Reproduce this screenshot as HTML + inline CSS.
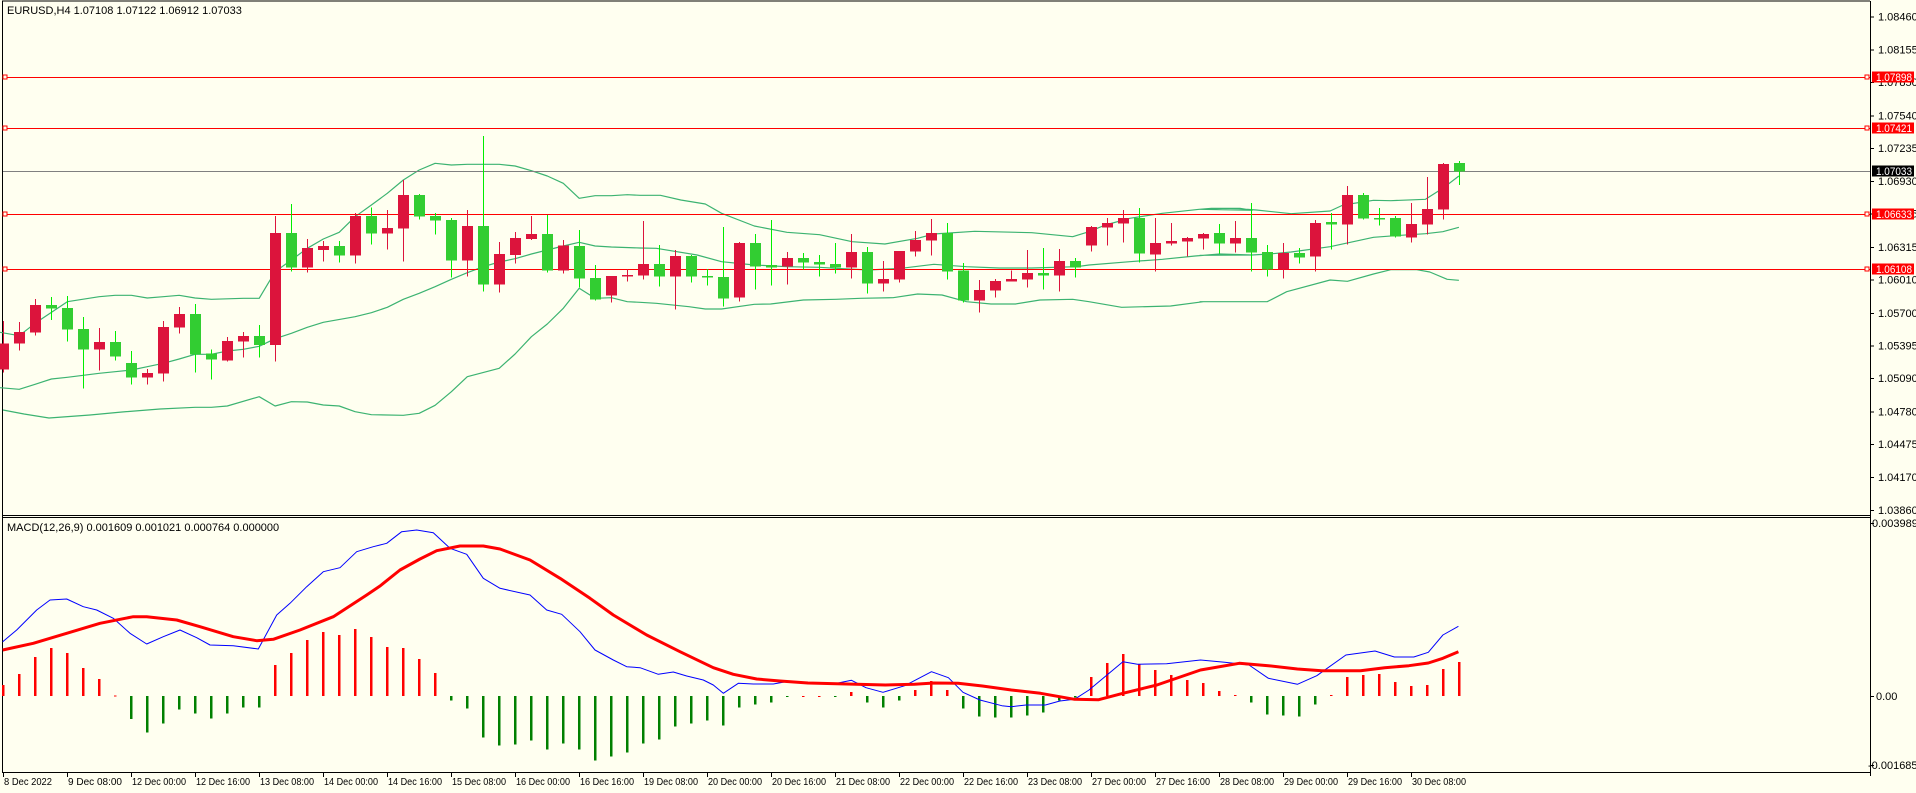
<!DOCTYPE html>
<html><head><meta charset="utf-8">
<style>
html,body{margin:0;padding:0;background:#fffff0;}
body{width:1916px;height:793px;overflow:hidden;}
svg{display:block;font-family:"Liberation Sans","DejaVu Sans",sans-serif;}
</style></head>
<body>
<svg id="c" width="1916" height="793" xmlns="http://www.w3.org/2000/svg">
<rect x="0" y="0" width="1916" height="793" fill="#fffff0"/>
<text x="7" y="14" font-size="11" fill="#000">EURUSD,H4  1.07108 1.07122 1.06912 1.07033</text>
<text x="7" y="531" font-size="11" fill="#000">MACD(12,26,9) 0.001609 0.001021 0.000764 0.000000</text>
</svg>
<script>
(function(){
var s=document.getElementById('c');var NS='http://www.w3.org/2000/svg';
function el(t,a,txt){var e=document.createElementNS(NS,t);for(var k in a)e.setAttribute(k,a[k]);if(txt!=null)e.textContent=txt;s.appendChild(e);return e;}
function line(x1,y1,x2,y2,c,w){el('line',{x1:x1,y1:y1,x2:x2,y2:y2,stroke:c,'stroke-width':w||1,'shape-rendering':'crispEdges'});}
function poly(pts,c,w){el('polyline',{points:pts.map(function(p){return p[0].toFixed(1)+','+p[1].toFixed(1)}).join(' '),fill:'none',stroke:c,'stroke-width':w,'stroke-linejoin':'round'});}
function py(p){return 77+(1.07898-p)*10726;}
line(2,1,1870,1,'#000');line(2.5,1,2.5,772,'#000');line(1870.5,1,1870.5,776,'#000');
line(2,515.5,1870,515.5,'#000');line(2,517.5,1870,517.5,'#000');line(2,772.5,1870,772.5,'#000');
function conv(arr,ox,sx,oy){return arr.map(function(p){return [ox+p[0]/sx,oy+p[1]/3];});}
var up=[].concat(
 [[0,120+637/3]],
 conv([[47,647],[86,610],[165,545],[243,530],[282,526],[322,526],[361,534],[400,530],[439,526],[478,534],[518,538],[596,535],[635,535],[674,455],[714,420],[753,385],[792,357],[831,337],[870,290],[910,255],[949,220],[988,180],[1027,150],[1066,130],[1106,135],[1145,133],[1184,133],[1223,133],[1262,138],[1302,152],[1341,168],[1380,190],[1419,235],[1458,227],[1498,227],[1537,224]],0,2.45,120),
 conv([[0,226],[50,226],[100,240],[160,252],[200,280],[280,318],[360,337],[440,344],[520,365],[600,372],[680,355],[720,342],[820,334],[960,338],[1060,350],[1100,335],[1140,315],[1200,295],[1280,280],[1370,268],[1400,265],[1470,265],[1500,271]],640,2.45,120),
 conv([[0,268],[60,265],[90,266],[130,270],[210,281],[300,273],[330,255],[400,241],[440,242],[520,238],[560,205],[597,168]],1200,2.306,120));
var mid=[].concat(
 conv([[0,803],[47,808],[86,793],[126,777],[165,772],[243,760],[282,755],[322,750],[361,740],[400,730],[439,717],[478,703],[518,703],[557,693],[596,688],[635,679],[674,656],[714,640],[753,622],[792,607],[870,590],[910,578],[949,562],[988,538],[1027,520],[1066,500],[1106,478],[1145,458],[1184,440],[1223,426],[1262,416],[1302,402],[1341,390],[1380,378],[1419,367],[1458,378],[1498,381]],0,2.45,120),
 conv([[0,384],[40,385],[140,405],[200,425],[280,435],[360,440],[440,442],[480,445],[560,450],[640,445],[720,433],[800,440],[880,444],[960,444],[1070,440],[1100,435],[1200,425],[1280,418],[1360,408],[1420,402],[1500,405]],640,2.45,120),
 conv([[0,406],[120,405],[160,402],[210,396],[300,380],[400,352],[450,347],[520,341],[560,335],[597,322]],1200,2.306,120));
var lo=[].concat(
 [[3,410],[24,414],[49,418],[90,415],[122,412],[160,409]],
 conv([[478,862],[518,862],[557,858],[635,830],[674,858],[714,845],[753,846],[792,855],[831,858],[870,875],[910,884],[988,886],[1027,880],[1066,856],[1106,815],[1145,770],[1223,745],[1262,702],[1302,650],[1341,612],[1380,565],[1419,505],[1458,535],[1498,533],[1537,545]],0,2.45,120),
 conv([[0,547],[40,550],[120,560],[160,567],[200,567],[280,553],[320,552],[400,540],[480,538],[540,535],[620,533],[680,522],[740,525],[800,545],[860,552],[920,552],[980,540],[1060,538],[1100,545],[1180,562],[1300,558],[1380,545],[1530,545]],640,2.45,120),
 conv([[0,545],[155,545],[200,515],[300,480],[340,484],[400,462],[440,449],[500,449],[530,456],[570,478],[597,481]],1200,2.306,120));
[up,mid,lo].forEach(function(a){poly(a,'#3cb371',1.2);});
[[1.07898,77],[1.07421,128],[1.06633,214],[1.06108,269]].forEach(function(h){
 line(3,h[1]+0.5,1870,h[1]+0.5,'#ff0000',1.3);
 el('rect',{x:3,y:h[1]-2,width:4,height:4,fill:'#fffff0',stroke:'#ff0000','stroke-width':1});
 el('rect',{x:1865,y:h[1]-2,width:4,height:4,fill:'#fffff0',stroke:'#ff0000','stroke-width':1});
});
line(3,171.5,1870,171.5,'#808080',1.2);
var C=[
[670,748,603,758,0],[636,671,606,692,0],[555,638,537,647,0],[555,566,531,600,1],[564,629,528,665,1],[627,689,591,806,1],[666,689,624,752,0],[666,710,633,722,1],[729,773,693,794,1],[759,773,747,794,0],
[621,761,603,785,0],[582,623,561,641,0],[582,703,552,758,1],[700,719,688,779,1],[663,722,651,725,0],[648,665,636,713,0],[648,675,615,713,1],[339,675,288,725,0],[339,443,252,455,1],[384,443,357,458,0],
[378,390,363,425,0],[378,407,363,428,1],[288,407,279,431,0],[288,341,262,374,1],[324,341,270,389,0],[225,326,180,425,0],[225,290,222,299,1],[288,302,279,344,1],[300,422,294,473,1],[318,422,270,470,0],
[318,494,48,515,1],[402,494,366,518,0],[354,405,336,431,0],[342,357,288,360,0],[342,452,285,458,1],[377,452,360,461,0],[378,476,330,503,1],[474,539,435,542,1],[468,527,468,548,0],[465,470,447,485,0],
[432,467,303,479,0],[432,470,375,500,1],[408,470,390,569,0],[408,470,405,488,1],[468,473,447,497,1],[471,536,321,560,1],[369,533,366,545,0],[369,440,342,509,1],[435,443,300,497,1],[414,440,396,494,0],
[414,428,399,449,1],[426,434,405,470,1],[432,443,369,461,1],[396,443,342,476,0],[396,491,381,521,1],[477,491,423,515,0],[393,479,393,488,0],[360,395,333,410,0],[339,362,297,407,0],[339,455,309,479,1],
[452,542,429,548,1],[510,542,480,578,0],[483,512,477,533,0],[477,485,452,485,0],[459,479,390,503,0],[459,467,384,509,1],[423,467,387,515,0],[423,443,414,473,1],[321,377,318,395,0],[309,323,294,377,0],
[294,311,270,368,0],[294,401,264,428,1],[369,404,294,455,0],[363,371,309,377,0],[354,365,351,410,0],[342,356,339,389,0],[339,371,312,401,1],[354,371,303,398,0],[354,398,249,455,1],[396,449,375,470,1],
[399,449,369,476,0],[399,413,384,431,1],[309,410,300,455,0],[306,314,279,389,1],[225,314,198,374,0],[225,296,219,299,1],[294,296,264,317,1],[294,350,288,353,1],[312,353,249,368,0],[267,314,171,344,0],
[132,269,129,299,0],[129,154,123,195,1]];
C.forEach(function(c,i){
 var x=3+16*i,bt=120+c[0]/3,bb=120+c[1]/3,wt=120+c[2]/3,wb=120+c[3]/3;
 var body=c[4]?'#32cd32':'#dc143c',wick=c[4]?'#00ee00':'#dc143c';
 line(x+0.5,wt,x+0.5,wb,wick,1);
 var h=Math.max(bb-bt,1.5);
 el('rect',{x:x-5,y:bt,width:11,height:h,fill:body,'shape-rendering':'crispEdges'});
});
var H=[[210,1],[177,1],[126,1],[99,1],[114,1],[159,1],[192,1],[241,1],[312,0],[353,0],[326,0],[284,0],[296,0],[311,0],[296,0],[278,0],[278,0],[150,1],[114,1],[75,1],[51,1],[60,1],[42,1],[66,1],[96,1],[99,1],[132,1],[174,1],[257,0],[281,0],[368,0],[392,0],[389,0],[377,0],[404,0],[386,0],[404,0],[437,0],[425,0],[413,0],[386,0],[374,0],[335,0],[326,0],[317,0],[332,0],[278,0],[268,0],[263,0],[246,0],[244,1],[244,1],[244,0],[231,1],[263,0],[278,0],[257,0],[225,1],[198,1],[225,1],[281,0],[305,0],[308,0],[308,0],[302,0],[293,0],[257,0],[248,0],[186,1],[144,1],[117,1],[147,1],[165,1],[180,1],[195,1],[204,1],[228,1],[240,1],[263,0],[299,0],[302,0],[305,0],[269,0],[240,1],[186,1],[180,1],[177,1],[201,1],[213,1],[210,1],[162,1],[141,1]];
H.forEach(function(h,i){var x=3+16*i,y=615+h[0]/3;
 el('rect',{x:x-1,y:Math.min(y,696),width:2.5,height:Math.max(Math.abs(y-696),1),fill:h[1]?'#ff0000':'#008000','shape-rendering':'crispEdges'});});
function cv(a,ox,sx,oy){return a.map(function(p){return [ox+p[0]/sx,oy+p[1]/3];});}
var blue=[].concat(
 cv([[8,485],[50,450],[110,390],[150,360],[200,357],[250,380],[290,390],[340,415],[390,460],[440,492],[490,470],[540,450],[590,473],[630,495],[700,497],[775,507],[830,405],[870,370],[920,320],[970,275],[1020,263],[1070,215],[1120,200]],0,3,480),
 cv([[0,90],[20,85],[65,50],[110,45],[160,53],[210,100],[260,118],[310,190],[360,220],[450,240],[500,285],[545,298],[600,350],[645,405],[700,435],[740,455],[780,458],[835,478],[880,471],[920,483],[970,495],[1000,510],[1030,535],[1075,505],[1120,507],[1180,507],[1230,498]],380,3,515),
 cv([[110,200],[170,205],[200,205],[230,196],[260,218],[295,232],[340,212],[395,170],[430,188],[460,232],[495,255],[540,272],[560,275],[590,270],[630,270],[660,258],[690,253],[720,225],[790,140],[820,148],[880,146],[950,135],[1000,142],[1050,150],[1090,190],[1150,208],[1190,182],[1250,120],[1310,108],[1350,126],[1390,126],[1420,112],[1450,60],[1482,34]],740,2.063,615));
var red=[].concat(
 cv([[8,510],[100,490],[200,460],[300,430],[400,410],[440,410],[530,420],[600,440],[700,470],[770,482],[820,478],[900,450],[1000,410],[1100,345]],0,3,480),
 cv([[0,213],[60,165],[120,132],[170,107],[240,93],[310,93],[360,102],[450,135],[540,190],[630,250],[700,300],[800,360],[900,410],[1000,458],[1060,478],[1130,492],[1200,498]],380,3,515),
 cv([[140,204],[300,210],[360,208],[400,204],[450,205],[500,213],[560,225],[620,235],[690,253],[740,254],[790,235],[860,210],[950,165],[1030,145],[1090,152],[1150,162],[1200,167],[1280,167],[1330,158],[1380,152],[1420,144],[1450,130],[1482,110]],740,2.063,615));
poly(blue,'#0000ff',1);poly(red,'#ff0000',3);
var P=['1.08460','1.08155','1.07850','1.07540','1.07235','1.06930','1.06625','1.06315','1.06010','1.05700','1.05395','1.05090','1.04780','1.04475','1.04170','1.03860'];
P.forEach(function(p){var y=py(parseFloat(p));line(1870,y+0.5,1874,y+0.5,'#000');el('text',{x:1878,y:y+4,'font-size':11,fill:'#000'},p);});
[['1.07898',77,'#ff0000'],['1.07421',128,'#ff0000'],['1.07033',171,'#000'],['1.06633',214,'#ff0000'],['1.06108',269,'#ff0000']].forEach(function(b){
 el('rect',{x:1872,y:b[1]-5.5,width:42,height:11,fill:b[2]});
 el('text',{x:1876,y:b[1]+4,'font-size':11,fill:'#fff',textLength:36,lengthAdjust:'spacingAndGlyphs'},b[0]);});
[['0.003989',523,1872],['0.00',696,1876],['-0.001685',765,1868]].forEach(function(m){
 line(1870,m[1]+0.5,1874,m[1]+0.5,'#000');el('text',{x:m[2],y:m[1]+4,'font-size':11,fill:'#000'},m[0]);});
var T=['8 Dec 2022','9 Dec 08:00','12 Dec 00:00','12 Dec 16:00','13 Dec 08:00','14 Dec 00:00','14 Dec 16:00','15 Dec 08:00','16 Dec 00:00','16 Dec 16:00','19 Dec 08:00','20 Dec 00:00','20 Dec 16:00','21 Dec 08:00','22 Dec 00:00','22 Dec 16:00','23 Dec 08:00','27 Dec 00:00','27 Dec 16:00','28 Dec 08:00','29 Dec 00:00','29 Dec 16:00','30 Dec 08:00'];
T.forEach(function(t,k){var x=3+64*k;line(x+0.5,772,x+0.5,777,'#000');
 el('text',{x:x+1,y:785,'font-size':10.5,fill:'#000','textLength':t.length>10?54:48,'lengthAdjust':'spacingAndGlyphs'},t);});
})();
</script>
</body></html>
